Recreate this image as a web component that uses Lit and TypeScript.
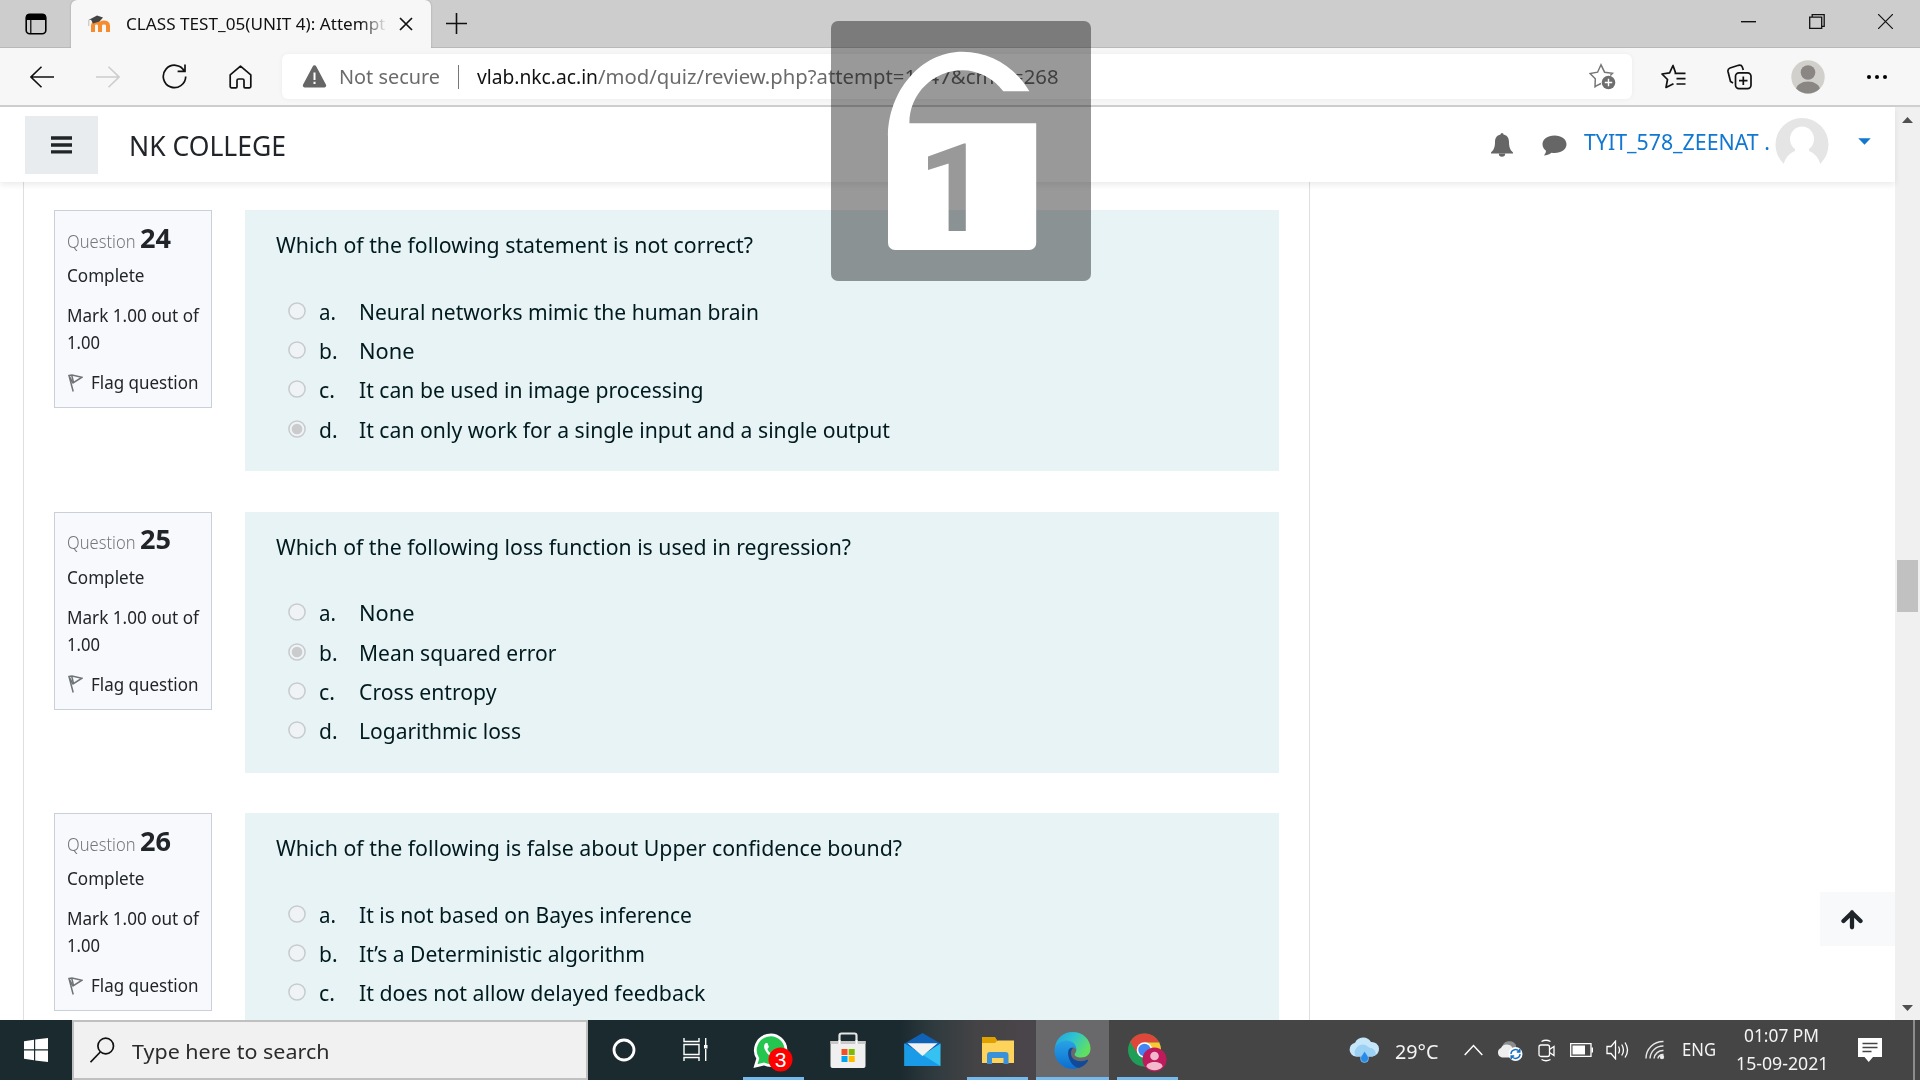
import { LitElement, html, svg, css } from "lit";
import { customElement, property } from "lit/decorators.js";

/* One line of text, condensed or stretched to a given advance width. */
@customElement("fit-text")
class FitText extends LitElement {
  @property({ type: Number }) w = 0;
  static styles = css`
    :host { display: inline-block; white-space: pre; flex: none; text-align: left; }
    .inner { display: inline-block; transform-origin: 0 50%; }
  `;
  render() { return html`<span class="inner"><slot></slot></span>`; }
  updated() {
    const inner = this.renderRoot.querySelector(".inner") as HTMLElement;
    this.style.width = this.w + "px";
    inner.style.transform = "none";
    const natural = inner.getBoundingClientRect().width;
    if (natural > 0) inner.style.transform = `scaleX(${this.w / natural})`;
  }
}

interface Option { text: string; w: number; checked?: boolean; }
interface Question { no: number; text: string; w: number; options: Option[]; }

const LETTERS = ["a.", "b.", "c.", "d."];
const LETTER_W = [17, 18.5, 16, 18.5];

const QUESTIONS: Question[] = [
  { no: 24, text: "Which of the following statement is not correct?", w: 477, options: [
    { text: "Neural networks mimic the human brain", w: 400 },
    { text: "None", w: 55.5 },
    { text: "It can be used in image processing", w: 344.5 },
    { text: "It can only work for a single input and a single output", w: 531, checked: true },
  ] },
  { no: 25, text: "Which of the following loss function is used in regression?", w: 575, options: [
    { text: "None", w: 55.5 },
    { text: "Mean squared error", w: 197.5, checked: true },
    { text: "Cross entropy", w: 137.5 },
    { text: "Logarithmic loss", w: 162 },
  ] },
  { no: 26, text: "Which of the following is false about Upper confidence bound?", w: 626, options: [
    { text: "It is not based on Bayes inference", w: 333 },
    { text: "It’s a Deterministic algorithm", w: 286 },
    { text: "It does not allow delayed feedback", w: 346.5 },
  ] },
];

@customElement("quiz-question")
class QuizQuestion extends LitElement {
  @property({ attribute: false }) q!: Question;
  static styles = css`
    :host { display: flex; align-items: flex-start; gap: 33px; height: 301.5px; }
    .info { box-sizing: border-box; width: 158px; height: 198px; border: 1.4px solid #cad0d7; background: #f8f9fc;
      padding: 9.5px 0 0 12px; font-size: 18px; color: #212529; flex: none; }
    .no { height: 41.5px; line-height: 34px; display: flex; align-items: baseline; gap: 4px; }
    .label { color: #74787c; font-weight: 300; }
    .num { font-size: 26.5px; font-weight: 700; }
    .line { line-height: 27px; height: 27px; display: flex; align-items: center; }
    .state { margin-bottom: 13px; }
    .flag { margin-top: 13px; }
    .flag svg { margin: 0 8px 0 1px; }
    .content { box-sizing: border-box; width: 1034px; height: 261px; background: #e7f3f5; padding: 17px 0 0 30.5px;
      color: #001a1e; font-size: 22px; flex: none; }
    .text { height: 34px; line-height: 34px; }
    .answers { padding: 30px 0 0 12.5px; }
    .opt { display: flex; align-items: center; height: 39.4px; line-height: 34px; }
    .letter { width: 39.5px; margin-left: 13px; flex: none; }
    .radio { margin-top: 0; flex: none; }
  `;
  render() {
    const q = this.q;
    return html`
      <div class="info">
        <div class="no"><fit-text class="label" .w=${68.5}>Question</fit-text><fit-text class="num" .w=${31}>${q.no}</fit-text></div>
        <div class="line state"><fit-text .w=${77.5}>Complete</fit-text></div>
        <div class="line"><fit-text .w=${132}>Mark 1.00 out of</fit-text></div>
        <div class="line"><fit-text .w=${33}>1.00</fit-text></div>
        <div class="line flag">
          <svg width="15" height="18" viewBox="0 0 15 18" fill="none" stroke="#6f7378" stroke-width="1.5"><path d="M1 1.5 5.2 17.5M1 1.5 4 1 14 3.2 5 9Z"/><path d="M3.8 1.5 5.5 8.5"/></svg>
          <fit-text .w=${107.5}>Flag question</fit-text>
        </div>
      </div>
      <div class="content">
        <div class="text"><fit-text .w=${q.w}>${q.text}</fit-text></div>
        <div class="answers">
          ${q.options.map((o, i) => html`<div class="opt">
            <svg class="radio" width="18" height="18" viewBox="0 0 18 18"><circle cx="9" cy="9" r="8.1" fill="#eff3f5" stroke="#c8cbcd" stroke-width="1.5"/>${o.checked ? svg`<circle cx="9" cy="9" r="5.3" fill="#c9cbcd"/>` : null}</svg>
            <span class="letter"><fit-text .w=${LETTER_W[i]}>${LETTERS[i]}</fit-text></span>
            <fit-text .w=${o.w}>${o.text}</fit-text>
          </div>`)}
        </div>
      </div>`;
  }
}

@customElement("browser-chrome")
class BrowserChrome extends LitElement {
  static styles = css`
    :host { display: block; height: 107px; }
    svg { display: block; flex: none; }
    .titlebar { height: 48px; background: #cdcdcd; display: flex; box-shadow: inset 0 -1px 0 #b9b9b9; }
    .actions { width: 71px; padding: 13px 0 0 25px; box-sizing: border-box; }
    .tab { width: 360px; height: 48px; box-sizing: border-box; background: #f7f7f7; border-radius: 6px 6px 0 0;
      box-shadow: 0 0 2px #999; clip-path: inset(0 -3px 0 -3px); display: flex; align-items: center; padding: 0 18px 0 16px; }
    .title { width: 262px; margin-left: 15px; font-size: 17px; line-height: 24px; overflow: hidden; white-space: nowrap; color: #111;
      -webkit-mask-image: linear-gradient(90deg, #000 235px, transparent 261px); mask-image: linear-gradient(90deg, #000 235px, transparent 261px); }
    .tabclose { margin-left: 12px; }
    .plus { padding: 13px 0 0 15px; }
    .win { margin-left: auto; display: grid; grid-template-columns: 68px 69px 69px; justify-items: center; padding: 14px 0 0; }
    .toolbar { height: 59px; box-sizing: border-box; background: #f7f7f7; border-bottom: 2px solid #cfcfcf; display: grid;
      grid-template-columns: 9px 66px 66px 66px 66px 9px 1350px 6px 71px 60px 77px 62px; align-items: center; justify-items: center; }
    .c2 { grid-column: 2; }
    .address { grid-column: 7; width: 1350px; height: 45px; box-sizing: border-box; background: #fff; border-radius: 6px; display: flex; align-items: center;
      padding: 0 16px 0 20px; font-size: 19.3px; line-height: 27px; color: #6b6b6b; box-shadow: 0 0 5px #0000000d; }
    .ns { margin-left: 12px; }
    .sep { width: 1.5px; height: 24px; background: #777; margin: 0 17.5px 0 17.5px; }
    .host { color: #111; }
    .star { margin-left: auto; }
    .c9 { grid-column: 9; }
  `;
  render() {
    return html`
      <div class="titlebar">
        <div class="actions"><svg width="22" height="22" viewBox="0 0 22 22"><rect x="1.2" y="1.2" width="19.6" height="19.6" rx="3.5" fill="none" stroke="#000" stroke-width="1.6"/><path d="M1 7V4a3 3 0 0 1 3-3h14a3 3 0 0 1 3 3v3z"/><path d="M5.8 7v14" stroke="#000" stroke-width="1.2"/></svg></div>
        <div class="tab">
          <svg width="24" height="18" viewBox="0 0 24 18"><path d="M6 17V10.5c0-4 7-4 7 0V17M13 10.5c0-4 8-4 8 0V17" fill="none" stroke="#f58d2f" stroke-width="4"/><path d="M1.5 5 10 .5 16 2.5 12.5 6.5 6 8.5 4 4.8z" fill="#444"/><path d="M1.8 5v6" stroke="#bdaea0" stroke-width=".8"/></svg>
          <div class="title"><fit-text .w=${259.5}>CLASS TEST_05(UNIT 4): Attempt</fit-text></div>
          <svg class="tabclose" width="14" height="14" viewBox="0 0 14 14"><path d="M1 1 13 13M13 1 1 13" stroke="#111" stroke-width="1.7"/></svg>
        </div>
        <div class="plus"><svg width="21" height="21" viewBox="0 0 21 21"><path d="M10.5 0v21M0 10.5h21" stroke="#111" stroke-width="1.6"/></svg></div>
        <div class="win">
          <svg width="15" height="15" viewBox="0 0 15 15"><path d="M0 7.7h15" stroke="#111" stroke-width="1.4"/></svg>
          <svg width="16" height="15" viewBox="0 0 16 15"><path d="M.7 3.2h12v11.1H.7zM3.2 3V.7h12v11.6h-2.4" fill="none" stroke="#111" stroke-width="1.3"/></svg>
          <svg width="15" height="15" viewBox="0 0 15 15"><path d="M0 0 15 15M15 0 0 15" stroke="#111" stroke-width="1.2"/></svg>
        </div>
      </div>
      <div class="toolbar">
        <svg class="c2" width="24" height="22" viewBox="0 0 24 22" fill="none" stroke="#111" stroke-width="1.6"><path d="M24 11H1M11.5.8 1 11l10.500 10.200"/></svg>
        <svg width="24" height="22" viewBox="0 0 24 22" fill="none" stroke="#cdcdcd" stroke-width="1.6"><path d="M0 11h23M12.500.8 23 11 12.500 21.200"/></svg>
        <svg width="25" height="25" viewBox="0 0 25 25" fill="none" stroke="#111" stroke-width="1.7"><path d="M22.300 7A11.200 11.200 0 1 0 23.700 12.500M23 .5V7.300H15.600"/></svg>
        <svg width="23" height="24" viewBox="0 0 23 24" fill="none" stroke="#111" stroke-width="1.700" stroke-linejoin="round"><path d="M1.200 9.800 11.500 1.200 21.800 9.800V21.500a1.300 1.300 0 0 1-1.300 1.300H16a1 1 0 0 1-1-1V15.500a1.500 1.500 0 0 0-1.500-1.500h-4A1.500 1.500 0 0 0 8 15.500v6.300a1 1 0 0 1-1 1H2.500a1.300 1.300 0 0 1-1.300-1.300z"/></svg>
        <div class="address">
          <svg width="25" height="23" viewBox="0 0 25 23"><path d="M10.700 1.400a2 2 0 0 1 3.600 0L24 19.700A2 2 0 0 1 22.300 22.500H2.700A2 2 0 0 1 1 19.700z" fill="#666"/><path d="M12.500 7.500v7.500M12.500 16.800v2.200" stroke="#fff" stroke-width="2"/></svg>
          <fit-text class="ns" .w=${101}>Not secure</fit-text>
          <span class="sep"></span>
          <fit-text class="host" .w=${121}>vlab.nkc.ac.in</fit-text><fit-text .w=${460.5}>/mod/quiz/review.php?attempt=1247&amp;cmid=268</fit-text>
          <svg class="star" width="27" height="27" viewBox="0 0 27 27"><path d="M7 23.300 6 23.800 6.300 15.700 1 10.500 8.600 9.200 12 1.800 15.600 9.200 23.500 10.300 21.300 12.600M5.700 23.700 12 20.500" fill="none" stroke="#777" stroke-width="1.500"/><circle cx="19.500" cy="19.500" r="6.800" fill="#6e6e6e"/><path d="M19.500 15.800v7.400M15.800 19.500h7.400" stroke="#fff" stroke-width="1.400"/></svg>
        </div>
        <svg class="c9" width="25" height="25" viewBox="0 0 25 25" fill="none" stroke="#111" stroke-width="1.700"><path d="M14.500 8.600 12 1.500 8.600 8.800 1 10 6.500 15.500 5 23.500 12.500 19.800M13.500 9.300H24.500M15.500 14.600h9M15.500 20h9" stroke-linejoin="round"/></svg>
        <svg width="25" height="26" viewBox="0 0 25 26" fill="none" stroke="#111" stroke-width="1.700"><rect x="8.500" y="8.800" width="15.500" height="15.800" rx="3.500"/><path d="M16.300 12.500v8.500M12 16.700h8.500M6 19 3.500 17.500 1 7.500Q.500 5 3 4L11.500 1.300Q14.500.8 15.300 3L16.300 6"/></svg>
        <svg width="34" height="34" viewBox="0 0 34 34"><defs><clipPath id="pc"><circle cx="17" cy="17" r="16.500"/></clipPath></defs><circle cx="17" cy="17" r="16.700" fill="#d2d0cc"/><g clip-path="url(#pc)" fill="#8a8683"><circle cx="17" cy="12.500" r="7.300"/><ellipse cx="17" cy="30" rx="12" ry="8.500"/></g></svg>
        <svg width="22" height="6" viewBox="0 0 22 6"><circle cx="3" cy="3" r="2"/><circle cx="11" cy="3" r="2"/><circle cx="19" cy="3" r="2"/></svg>
      </div>`;
  }
}

@customElement("task-bar")
class TaskBar extends LitElement {
  static styles = css`
    :host { display: flex; height: 60px; background: linear-gradient(90deg, #1b2a2f 0, #1b2a2f 900px, #303b3f 935px, #444345 975px, #4a454a 1030px, #454545 1120px, #454545 100%); color: #f4f4f4; }
    svg { display: block; flex: none; }
    .start { width: 72px; padding: 18px 0 0 24px; box-sizing: border-box; }
    .search { width: 516px; box-sizing: border-box; border: 2px solid #c0c0c0; background: #f1f1f1; display: flex; padding: 15px 0 0 16px; color: #2b2b2b; font-size: 20.8px; line-height: 32px; }
    .search fit-text { margin: -2px 0 0 17px; }
    .cells { display: grid; grid-template-columns: 72px 76px repeat(6, 74.8px); }
    .cell { display: flex; align-items: flex-start; justify-content: center; box-sizing: border-box; padding-top: 11px; }
    .cell.ring { padding-top: 18px; }
    .cell.tv { padding: 17px 4px 0 0; }
    .run { margin: 0 7px; box-shadow: inset 0 -3px #76b9ed; }
    .active { margin: 0 1px; background: #69696b; box-shadow: inset 0 -3px #76b9ed; }
    .tray { margin-left: auto; display: grid; align-items: center; font-size: 17.3px; line-height: 24px;
      grid-template-columns: 47px 69px 33px 41px 32.500px 36px 39px 37px 53.500px 122.500px 55px 7px; }
    .temp { font-size: 20.500px; margin-top: 2px; }
    .clock { display: grid; grid-template-rows: 28px 28px; width: 92px; justify-items: center; padding-top: 4px; }
    .edge { width: 1.500px; height: 60px; background: #8c8c8c; }
  `;
  render() {
    return html`
      <div class="start"><svg width="24" height="24" viewBox="0 0 24 24" fill="#fff"><path d="M0 3.300 10 1.800V11.300H0zM11.200 1.600 24 0V11.300H11.200zM0 12.500H10V22.200L0 20.800zM11.200 12.500H24V24L11.200 22.400z"/></svg></div>
      <div class="search">
        <svg width="25" height="26" viewBox="0 0 25 26" fill="none" stroke="#111" stroke-width="1.700"><circle cx="15.700" cy="9" r="7.800"/><path d="M10.300 15 .5 25.200"/></svg>
        <fit-text .w=${197.5}>Type here to search</fit-text>
      </div>
      <div class="cells">
        <div class="cell ring"><svg width="24" height="24" viewBox="0 0 24 24"><circle cx="12" cy="12" r="10" fill="none" stroke="#fff" stroke-width="2.800"/></svg></div>
        <div class="cell tv"><svg width="26" height="25" viewBox="0 0 26 25" fill="none" stroke="#fff" stroke-width="1.400"><path d="M1 1v3.500h15V1M1 24v-3.500h15V24M1 7.500h15v10H1zM22.700 1v7M22.700 12v12"/><path d="M21 8h3.500v3.500H21z" fill="#fff" stroke="none"/></svg></div>
        <div class="cell run"><svg width="40" height="42" viewBox="0 0 40 42"><path d="M2.500 35 4.800 27.500A15.300 15.300 0 1 1 11 33z" fill="#25c64f" stroke="#fff" stroke-width="2.800"/><path d="M13 12c-2 1-2.600 4-.6 7.500 3 5.500 8 8.500 11.500 7.500l1-4-4-1.700-2 1.800c-2-1-3.800-3-4.500-5l1.500-2-1.500-4z" fill="#fff"/><circle cx="27.500" cy="28.500" r="12" fill="#f00"/><text x="27.500" y="36" font-family="Liberation Sans" font-size="21" text-anchor="middle" fill="#fff">3</text></svg></div>
        <div class="cell"><svg width="36" height="38" viewBox="0 0 36 38"><path d="M9.500 12V4.500a2 2 0 0 1 2-2h13a2 2 0 0 1 2 2V12" fill="none" stroke="#e5e5e5" stroke-width="2.200"/><path d="M.5 10h35v25a2 2 0 0 1-2 2h-31a2 2 0 0 1-2-2z" fill="#f0f0f0"/><path d="M.5 10h35v3H.5z" fill="#c9c9c9"/><path d="M9.500 9v4M26.500 9v4" stroke="#fff" stroke-width="2"/><path d="M11.500 18h6v6h-6z" fill="#f25022"/><path d="M18.700 18h6v6h-6z" fill="#7fba00"/><path d="M11.500 25h6v6h-6z" fill="#00a4ef"/><path d="M18.700 25h6v6h-6z" fill="#ffb900"/></svg></div>
        <div class="cell"><svg width="37" height="36" viewBox="0 0 37 36"><path d="M.5 12.500 18.500 2 36.500 12.500V18H.5z" fill="#0f62b5"/><path d="M.5 12.500 18.500 24 36.500 12.500V35H.5z" fill="#35c1f1"/><path d="M.5 12.500 36.500 35H.5z" fill="#1a9be8"/><path d="M3.500 12.300h30L18.500 25z" fill="#f2f2f2"/></svg></div>
        <div class="cell run"><svg width="34" height="36" viewBox="0 0 34 36"><path d="M1 6h13l2 3v4H1z" fill="#dfa000"/><path d="M1 12h13l2.500-2.500H33V32H1z" fill="#fdd35c"/><path d="M6 33V24a3 3 0 0 1 3-3h15.500a3 3 0 0 1 3 3v9h-5v-6H11v6z" fill="#3b91d9"/></svg></div>
        <div class="cell active"><svg width="37" height="38" viewBox="0 0 37 38"><defs>
          <linearGradient id="eg" x1="0" y1="0" x2="1" y2=".5"><stop offset="0" stop-color="#239fe0"/><stop offset=".5" stop-color="#2fc3d0"/><stop offset="1" stop-color="#60e060"/></linearGradient>
          <linearGradient id="eb" x1="0" y1="0" x2="0" y2="1"><stop offset="0" stop-color="#2aa3e6"/><stop offset="1" stop-color="#0b6fd0"/></linearGradient></defs>
          <path d="M1 17C2 7 9.500 1 18.500 1 29 1 36.500 8.500 36.500 17.500c0 6-4 9-9.500 9-4 0-6.500-1.500-6.500-3 0-1 1.800-2 1.800-5 0-3.500-3.500-6.500-8.300-6.500C8 12 3 14 1 17z" fill="url(#eg)"/>
          <path d="M.5 19C1 13 6.500 9.500 12.500 9.500c6 0 10 4 9.700 9-1.500-2.300-3.700-2.500-5.200-1.500-3.500 2.500-4 7.500-1 12.500 2 3.500 5 6.300 8.500 7.500C11 41 0 31 .5 19z" fill="url(#eb)"/>
          <path d="M14.500 19c-2 8 4 17.500 10.500 18 4-1.200 7-3.700 9-7 .5-1-.5-1.500-1.500-1-6.500 3-15.500.5-15.500-6.500 0-2 .5-4 2-5.500-2-.8-3.800.5-4.500 2z" fill="#114a9a"/></svg></div>
        <div class="cell run"><svg width="40" height="42" viewBox="0 0 40 42"><circle cx="17.500" cy="19" r="16.500" fill="#1e9e57"/><path d="M3.200 10.700A16.500 16.500 0 0 1 31.800 10.700L34 11.500H17.500L10 22z" fill="#e0473b"/><path d="M17.500 11.500h14.700A16.500 16.500 0 0 1 17.500 35.500L25 22z" fill="#fbc934"/><circle cx="17.500" cy="19" r="7.800" fill="#fff"/><circle cx="17.500" cy="19" r="6.200" fill="#4285f4"/><circle cx="27.500" cy="28.500" r="12" fill="#bf1a5c"/><circle cx="27.500" cy="25" r="4.300" fill="#f3b8cc"/><path d="M19.500 35.500c0-6 16-6 16 0-3 5-13 5-16 0z" fill="#f3b8cc"/></svg></div>
      </div>
      <div class="tray">
        <svg width="32" height="26" viewBox="0 0 32 26"><path d="M8 19.500a7 7 0 0 1-1-13.800A9 9 0 0 1 23 5a7.200 7.200 0 0 1 1.500 14.500z" fill="#c6e6f9"/><path d="M8 19.500a7 7 0 0 1 0-8 8 8 0 0 1 13-1 8 8 0 0 1 7 7l-3.500 2z" fill="#9bd1f4"/><path d="M16.500 14c2 3.500 4 5 4 7.500a4 4 0 0 1-8 0c0-2.500 2.500-4 4-7.500z" fill="#2a8ae8" stroke="#a5d5f5" stroke-width=".6"/></svg>
        <fit-text class="temp" .w=${43.5}>29°C</fit-text>
        <svg width="19" height="12" viewBox="0 0 19 12"><path d="M.7 11 9.500 1.500 18.300 11" fill="none" stroke="#fff" stroke-width="1.500"/></svg>
        <svg width="26" height="22" viewBox="0 0 26 22"><path d="M5 9a7.500 7.500 0 0 1 14-3v8H5z" fill="#8d8d8d"/><path d="M5 18.500a5 5 0 0 1-1-9.500 6.500 6.500 0 0 1 11-1l3 10.500z" fill="#eee"/><circle cx="18.500" cy="15" r="7" fill="#fff"/><path d="M14 15a4.500 4.500 0 0 1 8.500-2M23 15a4.500 4.500 0 0 1-8.500 2M22.800 10v3h-3M14.200 20v-3h3" fill="none" stroke="#1573c6" stroke-width="1.500"/></svg>
        <svg width="18" height="23" viewBox="0 0 18 23" fill="none" stroke="#fff" stroke-width="1.300"><rect x="1" y="6" width="10.500" height="11.500" rx="2"/><path d="M11.500 10.500 16 7.500v9l-4.500-3M3.500 2.500q4.500-2.500 9 0M3.500 20.500q4.500 2.500 9 0"/></svg>
        <svg width="24" height="14" viewBox="0 0 24 14"><path d="M.7.7h20.300v12.600H.7z" fill="none" stroke="#fff" stroke-width="1.300"/><path d="M2.500 2.500H15v9H2.500z" fill="#fff"/><path d="M21.500 4.500h1.500v5h-1.500z" fill="#fff"/></svg>
        <svg width="24" height="20" viewBox="0 0 24 20" fill="none" stroke="#fff" stroke-width="1.300"><path d="M1 6.500h4L9.500 1.200v17.600L5 13.500H1zM12.500 6.500q2 3.500 0 7M15.700 4.500q3.500 5.500 0 11M19 2.500q5 7.500 0 15"/></svg>
        <svg width="20" height="20" viewBox="0 0 20 20" fill="none" stroke="#e6e6e6" stroke-width="1.400"><path d="M1 18.500A17 17 0 0 1 18.500 1.500M5 18.500A13 13 0 0 1 18.500 6M9 18.500A9 9 0 0 1 18.500 10.500M12.800 18.500a5.500 5.500 0 0 1 5.700-4"/><circle cx="17" cy="17" r="1.500" fill="#fff"/></svg>
        <fit-text .w=${34}>ENG</fit-text>
        <div class="clock"><fit-text .w=${75}>01:07 PM</fit-text><fit-text .w=${92.5}>15-09-2021</fit-text></div>
        <svg width="24" height="24" viewBox="0 0 24 24"><path d="M0 0h24v19H15l-4.300 5L6.500 19H0z" fill="#fff"/><path d="M4.500 5.500h15M4.500 9.500h15M4.500 13.500h9" stroke="#444" stroke-width="1.300"/></svg>
        <span class="edge"></span>
      </div>`;
  }
}

@customElement("app-root")
class AppRoot extends LitElement {
  static styles = css`
    :host { display: flex; flex-direction: column; width: 1920px; height: 1080px; overflow: hidden; position: relative; background: #fff;
      font-family: "Noto Sans", "Open Sans", sans-serif; }
    svg { display: block; flex: none; }
    .page { height: 913px; display: flex; }
    .main { width: 1895px; display: flex; flex-direction: column; }
    .header { height: 75px; flex: none; box-sizing: border-box; display: flex; box-shadow: 0 3px 6px #00000014; z-index: 1; background: #fff; }
    .menu { width: 73.500px; height: 58px; margin: 9px 0 0 24.500px; background: #e8ecef; display: flex; justify-content: center; box-sizing: border-box; padding-top: 20px; }
    .brand { margin: 18px 0 0 30.500px; font-size: 27.500px; line-height: 42px; color: #212529; }
    .bell { margin: 25px 0 0 auto; }
    .chat { margin: 28px 0 0 28px; }
    .user { margin: 18px 0 0 16.500px; font-size: 22px; line-height: 33px; color: #1177d1; }
    .avatar { margin: 11px 0 0 5px; }
    .caret { margin: 31px 24px 0 29.500px; }
    .body { height: 838px; overflow: hidden; display: flex; justify-content: space-between; align-items: flex-end; }
    .course { width: 1287px; height: 838px; box-sizing: border-box; margin-left: 23px; border: solid #dddfe2; border-width: 0 1.400px; padding: 28px 0 0 30px; }
    .top { width: 75px; height: 54px; margin-bottom: 74px; background: #f8f9fb; box-sizing: border-box; padding: 17px 0 0 20.500px; }
    .scroll { width: 25px; background: #f0f0f0; display: flex; flex-direction: column; align-items: center; box-sizing: border-box; padding: 10px 0 9px; }
    .thumb { width: 21px; height: 52px; background: #c1c1c1; margin: 437px 0 auto; }
    .lock { position: absolute; z-index: 5; left: 831px; top: 21px; width: 260px; height: 260px; border-radius: 7px; background: rgba(0, 0, 0, 0.4); }
  `;
  render() {
    return html`
      <browser-chrome></browser-chrome>
      <div class="page">
        <div class="main">
          <div class="header">
            <div class="menu"><svg width="21" height="18" viewBox="0 0 21 18"><path d="M0 2h21M0 9h21M0 15.800h21" stroke="#1f2429" stroke-width="3.300"/></svg></div>
            <fit-text class="brand" .w=${157}>NK COLLEGE</fit-text>
            <svg class="bell" width="24" height="25" viewBox="0 0 24 25" fill="#666"><path d="M10.500 2.500a1.500 1.500 0 0 1 3 0C17.500 3.300 19 6.500 19 10c0 6 1.500 8 4 10.500v1H1v-1C3.500 18 5 16 5 10c0-3.500 1.500-6.700 5.500-7.500z"/><path d="M8.800 21.500h6.400a3.200 3.200 0 0 1-6.400 0z"/></svg>
            <svg class="chat" width="25" height="21" viewBox="0 0 25 21" fill="#666"><path d="M12.500.5C19.500.5 24.500 4.300 24.500 9.300s-5 8.700-12 8.700c-1 0-2-.1-3-.3C7 19.500 4.500 20.500 2 20.500 3 19 4 17.700 4 15.800 2 14.200.5 12 .5 9.300.5 4.300 5.500.5 12.500.5z"/></svg>
            <fit-text class="user" .w=${186}>TYIT_578_ZEENAT .</fit-text>
            <svg class="avatar" width="54" height="47" viewBox="0 0 54 47"><defs><clipPath id="ac"><circle cx="27" cy="26.500" r="26.500"/></clipPath></defs><circle cx="27" cy="26.500" r="26.500" fill="#e5e5e5"/><g fill="#fff"><ellipse cx="27" cy="21" rx="12" ry="12.500"/><path d="M20 28h14v5c6 2.500 10 7 11.500 14h-37C10 40 14 35.500 20 33z"/></g></svg>
            <svg class="caret" width="13" height="7" viewBox="0 0 13 7"><path d="M.3.300h12.400L6.500 6.700z" fill="#1177d1"/></svg>
          </div>
          <div class="body">
            <div class="course">${QUESTIONS.map((q) => html`<quiz-question .q=${q}></quiz-question>`)}</div>
            <div class="top"><svg width="22" height="22" viewBox="0 0 22 22" fill="none" stroke="#1f2429" stroke-width="4.300"><path d="M11 3.500V18.300M2.500 12 11 3.700 19.500 12" stroke-linecap="round"/></svg></div>
          </div>
        </div>
        <div class="scroll">
          <svg width="11" height="6" viewBox="0 0 11 6"><path d="M5.500 0 11 6H0z" fill="#505050"/></svg>
          <div class="thumb"></div>
          <svg width="11" height="6" viewBox="0 0 11 6"><path d="M5.500 6 11 0H0z" fill="#505050"/></svg>
        </div>
      </div>
      <task-bar></task-bar>
      <div class="lock">
        <svg width="260" height="260" viewBox="0 0 260 260"><defs><linearGradient id="num" gradientUnits="userSpaceOnUse" x1="0" y1="89" x2="0" y2="289"><stop offset=".5" stop-color="#999"/><stop offset=".5" stop-color="#8b9293"/></linearGradient></defs>
          <path d="M57 222V116C57 70 90 30.700 131.500 30.700 160 30.700 185 47 198.400 70.300H172.300C162 57 147 49.300 131.500 49.300 103 49.300 78.400 72 78.400 102.300H205.200V222a7 7 0 0 1-7 7H64a7 7 0 0 1-7-7z" fill="#fff"/>
          <text x="122" y="209.700" font-family="Roboto" font-weight="700" font-size="122" text-anchor="middle" fill="url(#num)">1</text></svg>
      </div>`;
  }
}
